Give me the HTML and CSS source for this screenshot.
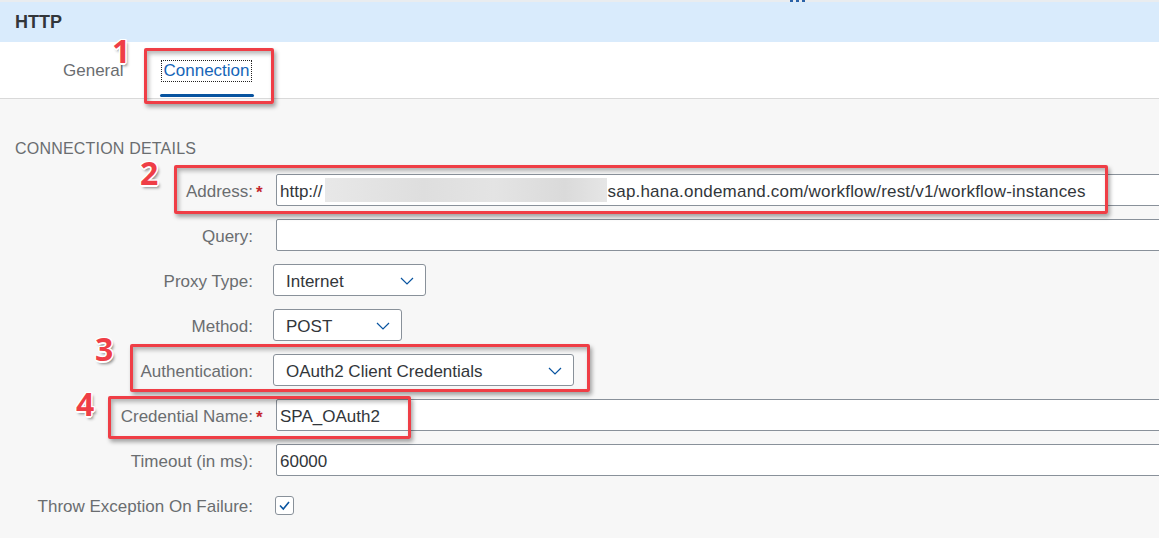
FILE: index.html
```html
<!DOCTYPE html>
<html lang="en">
<head>
<meta charset="utf-8">
<title>HTTP – Connection</title>
<link rel="stylesheet" href="styles.css">
</head>
<body>
<div class="page">
  <div class="top-strip"><span class="strip-mark"></span></div>
  <header class="title-bar"><h1 class="title">HTTP</h1></header>
  <nav class="tabs">
    <div class="tab">General</div>
    <div class="tab tab-active"><span class="tab-focus">Connection</span></div>
  </nav>
  <main class="content">
    <h2 class="section-title">CONNECTION DETAILS</h2>
    <div class="form">
      <div class="row">
        <span class="label">Address:</span><span class="req">*</span>
        <div class="input"><span>http://</span><span class="blur"></span><span class="url">sap.hana.ondemand.com/workflow/rest/v1/workflow-instances</span></div>
      </div>
      <div class="row">
        <span class="label">Query:</span><span class="req"></span>
        <div class="input"></div>
      </div>
      <div class="row">
        <span class="label">Proxy Type:</span><span class="req"></span>
        <div class="select select-proxy"><span>Internet</span><svg class="chev" viewBox="0 0 14 8"><polyline points="1,1 7,7 13,1"/></svg></div>
      </div>
      <div class="row">
        <span class="label">Method:</span><span class="req"></span>
        <div class="select select-method"><span>POST</span><svg class="chev" viewBox="0 0 14 8"><polyline points="1,1 7,7 13,1"/></svg></div>
      </div>
      <div class="row">
        <span class="label">Authentication:</span><span class="req"></span>
        <div class="select select-auth"><span>OAuth2 Client Credentials</span><svg class="chev" viewBox="0 0 14 8"><polyline points="1,1 7,7 13,1"/></svg></div>
      </div>
      <div class="row">
        <span class="label">Credential Name:</span><span class="req">*</span>
        <div class="input"><span>SPA_OAuth2</span></div>
      </div>
      <div class="row">
        <span class="label">Timeout (in ms):</span><span class="req"></span>
        <div class="input"><span>60000</span></div>
      </div>
      <div class="row">
        <span class="label">Throw Exception On Failure:</span><span class="req"></span>
        <span class="checkbox"><svg viewBox="0 0 17 17"><path d="M4 8.5 L7.3 12 L13 5"/></svg></span>
      </div>
    </div>
  </main>

  <div class="mark mark-1"></div>
  <div class="mark mark-2"></div>
  <div class="mark mark-3"></div>
  <div class="mark mark-4"></div>
  <span class="num num-1">1</span>
  <span class="num num-2">2</span>
  <span class="num num-3">3</span>
  <span class="num num-4">4</span>
</div>
</body>
</html>
```

FILE: styles.css
```css
* { box-sizing: border-box; }
html, body { margin: 0; height: 100%; }
body {
  font-family: "Liberation Sans", Arial, sans-serif;
  background: #f7f7f7;
  color: #32363a;
  overflow: hidden;
}
.page {
  position: relative;
  min-height: 100%;
  display: flex;
  flex-direction: column;
}
.top-strip {
  height: 2px;
  background: #e9ecef;
  display: flex;
  padding-left: 790px;
}
.strip-mark {
  width: 18px;
  height: 2px;
  background: repeating-linear-gradient(90deg, #2a62a8 0 3px, transparent 3px 6px);
}
.title-bar {
  height: 40px;
  background: #d9ebfc;
  padding-left: 15px;
  display: flex;
  align-items: center;
}
.title {
  margin: 0;
  font-size: 18px;
  font-weight: 700;
  line-height: 40px;
  color: #32363a;
}
.tabs {
  height: 57px;
  background: #fff;
  border-bottom: 1px solid #d9d9d9;
  display: flex;
  padding-left: 43px;
}
.tab {
  position: relative;
  height: 56px;
  padding: 2px 20px 0;
  display: flex;
  align-items: center;
  font-size: 17px;
  color: #6a6d70;
}
.tab-active {
  padding: 2px 18px 0;
  color: #1565b8;
}
.tab-active::after {
  content: "";
  position: absolute;
  left: 17px;
  right: 16px;
  bottom: 1px;
  height: 3px;
  border-radius: 2px;
  background: #0854a0;
}
.tab-focus {
  border: 1px dotted #222;
  padding: 0 1px;
  line-height: 20px;
}
.content {
  flex: 1;
  padding-top: 41px;
}
.section-title {
  margin: 0 0 16px;
  padding-left: 15px;
  font-size: 16px;
  font-weight: 400;
  line-height: 18px;
  letter-spacing: 0.2px;
  color: #6a6d70;
}
.form {
  display: flex;
  flex-direction: column;
  gap: 13px;
}
.row {
  display: flex;
  align-items: center;
  height: 32px;
}
.label {
  flex: none;
  width: 253px;
  padding-top: 3px;
  text-align: right;
  white-space: nowrap;
  font-size: 17px;
  color: #6a6d70;
}
.req {
  flex: none;
  align-self: stretch;
  width: 20px;
  padding: 5.5px 0 0 3px;
  font-size: 17px;
  font-weight: 700;
  line-height: 26.5px;
  color: #c4262e;
}
.input {
  flex: 1;
  height: 32px;
  margin: 0 -10px 0 3px;
  padding: 3px 0 0 3px;
  display: flex;
  align-items: center;
  background: #fff;
  border: 1px solid #89919a;
  border-radius: 2px;
  font-size: 17px;
  color: #32363a;
  white-space: nowrap;
  overflow: hidden;
}
.url { letter-spacing: 0.2px; }
.blur {
  flex: none;
  width: 282px;
  height: 24px;
  margin: -3px 1px 0 2px;
  background: linear-gradient(90deg, #e8e8e8 0%, #dedede 35%, #e4e4e4 60%, #dadada 85%, #e6e6e6 100%);
  filter: blur(0.6px);
}
.select {
  flex: none;
  height: 32px;
  padding: 3px 11px 0 12px;
  display: flex;
  align-items: center;
  justify-content: space-between;
  background: #fff;
  border: 1px solid #89919a;
  border-radius: 3px;
  font-size: 17px;
  color: #32363a;
}
.select-proxy { width: 153px; }
.select-method { width: 129px; }
.select-auth { width: 301px; }
.chev {
  width: 14px;
  height: 8px;
  margin-top: -2px;
  fill: none;
  stroke: #0854a0;
  stroke-width: 1.2;
}
.checkbox {
  flex: none;
  width: 19px;
  height: 19px;
  margin-left: 2px;
  background: #fff;
  border: 1px solid #89919a;
  border-radius: 3px;
  display: flex;
}
.checkbox svg {
  width: 17px;
  height: 17px;
  fill: none;
  stroke: #0854a0;
  stroke-width: 1.6;
}

/* annotation overlays */
.mark {
  position: absolute;
  border: 3px solid #ef3e46;
  border-radius: 2px;
  box-shadow: 2px 3px 4px rgba(0, 0, 0, 0.35), inset 2px 3px 4px rgba(0, 0, 0, 0.28);
}
.mark-1 { left: 144px; top: 48px; width: 130px; height: 56px; }
.mark-2 { left: 174px; top: 165px; width: 934px; height: 49px; }
.mark-3 { left: 130px; top: 344px; width: 460px; height: 48px; }
.mark-4 { left: 108px; top: 396px; width: 303px; height: 43px; }
.num {
  position: absolute;
  font: 700 32px/24px "Open Sans", "Liberation Sans", Arial, sans-serif;
  color: #ef3e46;
  text-shadow:
    1.5px 0 #fff, -1.5px 0 #fff, 0 1.5px #fff, 0 -1.5px #fff,
    1px 1px #fff, -1px -1px #fff, 1px -1px #fff, -1px 1px #fff,
    2px 3px 3px rgba(0, 0, 0, 0.45);
}
.num-1 { left: 112px; top: 39px; }
.num-2 { left: 140px; top: 161px; }
.num-3 { left: 95px; top: 337px; }
.num-4 { left: 76px; top: 392px; }
```
